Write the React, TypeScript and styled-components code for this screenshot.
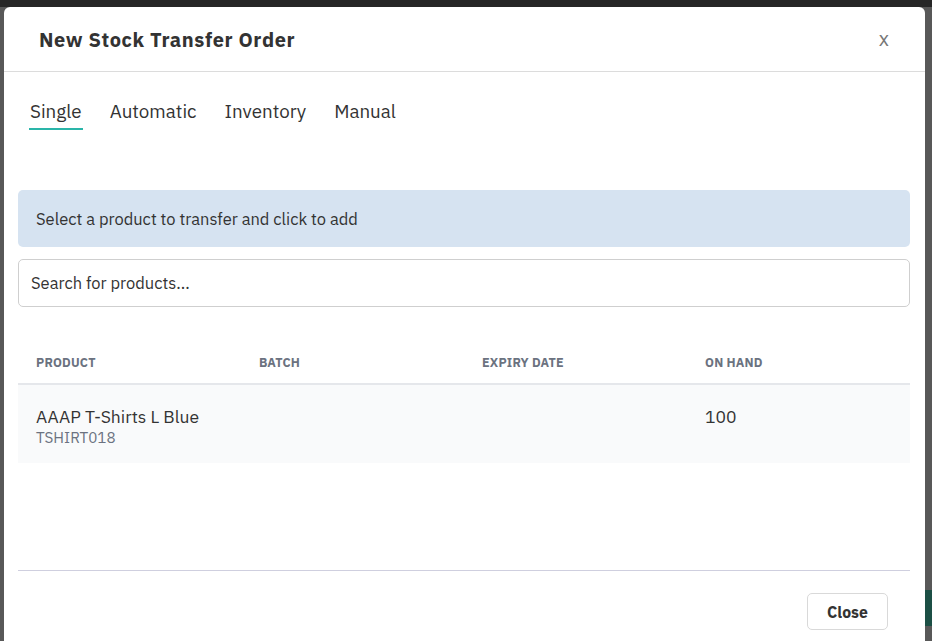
import React, { useState } from "react";
import styled, { createGlobalStyle } from "styled-components";

const Global = createGlobalStyle`
  html, body { margin: 0; padding: 0; }
  body {
    font-family: "IBM Plex Sans", "Noto Sans", "Liberation Sans", sans-serif;
    background: #585858;
    overflow: hidden;
  }
  * { box-sizing: border-box; }
`;

const Backdrop = styled.div`
  height: 641px;
  border-top: 7px solid #262626;
  padding: 0 7px 0 4px;
  background:
    linear-gradient(#1c4f45, #1c4f45) right 583px / 7px 36px no-repeat,
    #585858;
`;

const Modal = styled.div`
  background: #fff;
  border-radius: 6px 6px 0 0;
  height: 700px;
  display: flex;
  flex-direction: column;
`;

const Header = styled.div`
  height: 65px;
  flex: none;
  display: flex;
  align-items: center;
  justify-content: space-between;
  padding: 0 36px 0 35px;
  border-bottom: 1px solid #dcdcdc;
`;

const Title = styled.h2`
  margin: 0;
  font-size: 20px;
  font-weight: 700;
  letter-spacing: 0.6px;
  color: #333;
`;

const CloseX = styled.button`
  border: none;
  background: none;
  padding: 0;
  font-family: inherit;
  font-size: 20px;
  color: #777;
  cursor: pointer;
  line-height: 1;
`;

const Body = styled.div`
  padding: 27px 15px 0 14px;
  height: 498px;
  flex: none;
  display: flex;
  flex-direction: column;
`;

const Tabs = styled.div`
  display: flex;
  gap: 26px;
  padding-left: 11px;
`;

const Tab = styled.button<{ $active?: boolean }>`
  border: none;
  background: none;
  padding: 0 1px 5px;
  font-family: inherit;
  font-size: 18.8px;
  line-height: 24px;
  color: #333;
  cursor: pointer;
  border-bottom: 2px solid ${(p) => (p.$active ? "#2ab5a9" : "transparent")};
`;

const Alert = styled.div`
  margin-top: 60px;
  height: 57px;
  display: flex;
  align-items: center;
  background: #d6e3f1;
  border-radius: 5px;
  padding: 0 18px;
  font-size: 16.5px;
  color: #333;
`;

const Search = styled.input`
  margin-top: 12px;
  height: 48px;
  width: 100%;
  border: 1px solid #cfcfcf;
  border-radius: 5px;
  padding: 0 12px;
  font-family: inherit;
  font-size: 16.5px;
  color: #333;
  outline: none;
  &::placeholder { color: #333; }
`;

const Table = styled.div`
  margin-top: 37px;
  display: flex;
  flex-direction: column;
`;

const HeadRow = styled.div`
  display: grid;
  grid-template-columns: repeat(4, 1fr);
  height: 41px;
  padding-bottom: 4px;
  align-items: center;
  border-bottom: 2px solid #e5e7eb;
`;

const HeadCell = styled.div`
  padding-left: 18px;
  font-size: 12.5px;
  font-weight: 700;
  letter-spacing: 0.2px;
  text-transform: uppercase;
  color: #6b7280;
`;

const Row = styled.div`
  display: grid;
  grid-template-columns: repeat(4, 1fr);
  height: 78px;
  padding-top: 21px;
  background: #f9fafb;
`;

const Cell = styled.div`
  padding-left: 18px;
  display: flex;
  flex-direction: column;
`;

const Name = styled.span`
  font-size: 17.5px;
  line-height: 22px;
  color: #333;
`;

const Code = styled.span`
  font-size: 15.2px;
  line-height: 18px;
  color: #6b7280;
`;

const Footer = styled.div`
  margin: 0 15px 0 14px;
  border-top: 1px solid #cfcfdf;
  display: flex;
  justify-content: flex-end;
  padding: 22px 22px;
`;

const Button = styled.button`
  width: 81px;
  height: 37px;
  border: 1px solid #d9d9d9;
  border-radius: 5px;
  background: #fff;
  font-family: inherit;
  font-size: 15.8px;
  font-weight: 700;
  color: #333;
  cursor: pointer;
`;

const tabs = ["Single", "Automatic", "Inventory", "Manual"];

export default function App() {
  const [active, setActive] = useState("Single");
  return (
    <>
      <Global />
      <Backdrop>
        <Modal>
          <Header>
            <Title>New Stock Transfer Order</Title>
            <CloseX>x</CloseX>
          </Header>
          <Body>
            <Tabs>
              {tabs.map((t) => (
                <Tab key={t} $active={t === active} onClick={() => setActive(t)}>
                  {t}
                </Tab>
              ))}
            </Tabs>
            <Alert>Select a product to transfer and click to add</Alert>
            <Search placeholder="Search for products..." />
            <Table>
              <HeadRow>
                <HeadCell>Product</HeadCell>
                <HeadCell>Batch</HeadCell>
                <HeadCell>Expiry Date</HeadCell>
                <HeadCell>On Hand</HeadCell>
              </HeadRow>
              <Row>
                <Cell>
                  <Name>AAAP T-Shirts L Blue</Name>
                  <Code>TSHIRT018</Code>
                </Cell>
                <Cell />
                <Cell />
                <Cell>
                  <Name>100</Name>
                </Cell>
              </Row>
            </Table>
          </Body>
          <Footer>
            <Button>Close</Button>
          </Footer>
        </Modal>
      </Backdrop>
    </>
  );
}
